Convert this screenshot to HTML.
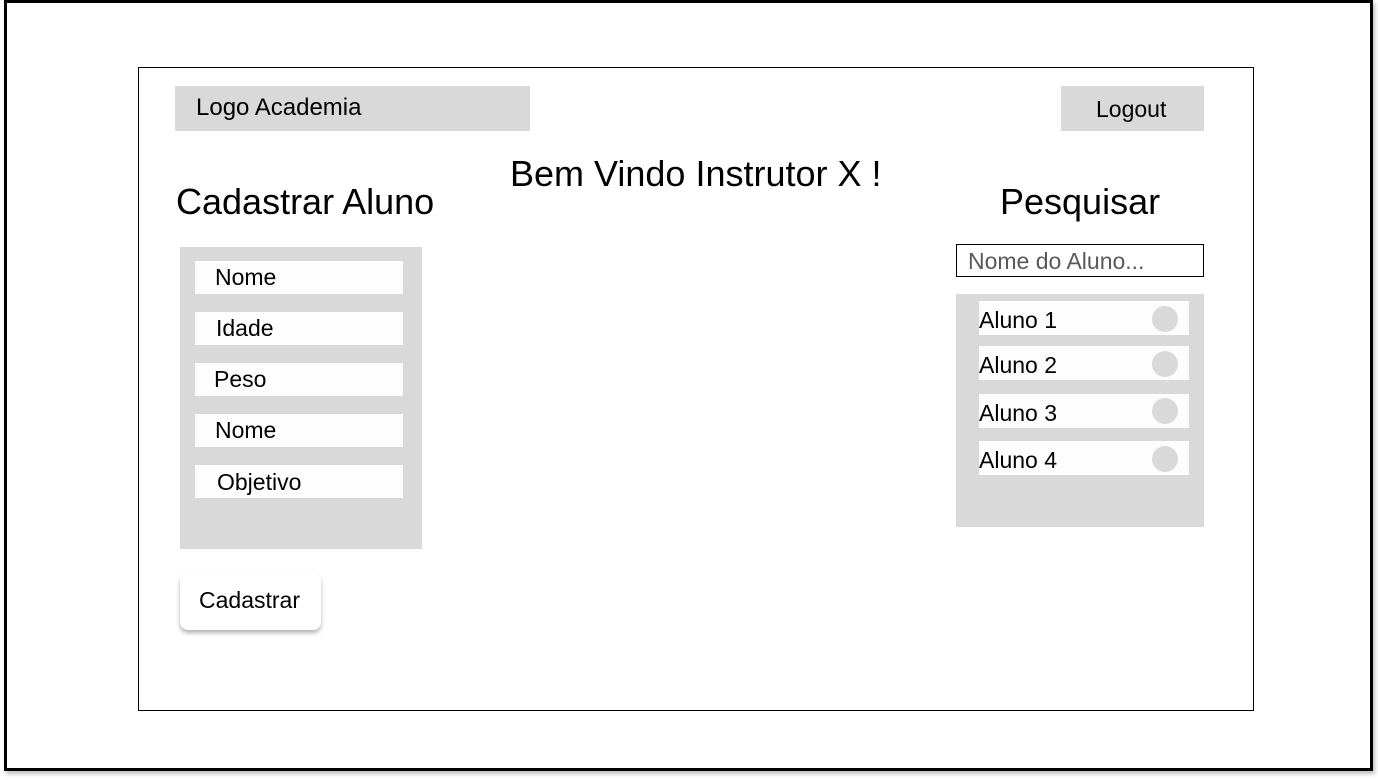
<!DOCTYPE html>
<html><head><meta charset="utf-8"><style>
*{margin:0;padding:0;box-sizing:border-box}
body{width:1378px;height:780px;background:#fff;position:relative;overflow:hidden;font-family:"Liberation Sans",Arial,sans-serif;color:#000}
.a{position:absolute;white-space:nowrap}
.g{background:#d9d9d9}
.w{background:#fdfdfd}
.t{letter-spacing:0}
</style></head><body>
<div class="a" style="left:4px;top:0;width:1369px;height:771px;border:3px solid #000;box-shadow:2px 3px 4px rgba(0,0,0,0.25)"></div>
<div class="a" style="left:138px;top:67px;width:1116px;height:644px;border:1px solid #000"></div>

<div class="a g" style="left:175px;top:86px;width:355px;height:45px"></div>
<div class="a t" style="left:196px;top:94px;font-size:24px">Logo Academia</div>
<div class="a g" style="left:1061px;top:86px;width:143px;height:45px"></div>
<div class="a t" style="left:1096px;top:96px;font-size:23px">Logout</div>

<div class="a t" style="left:510px;top:153px;font-size:36px">Bem Vindo Instrutor X !</div>
<div class="a t" style="left:176px;top:181px;font-size:36px">Cadastrar Aluno</div>
<div class="a t" style="left:1000px;top:181px;font-size:36px">Pesquisar</div>

<div class="a g" style="left:180px;top:247px;width:242px;height:302px"></div>
<div class="a w" style="left:195px;top:261px;width:208px;height:33px"></div>
<div class="a t" style="left:215px;top:264px;font-size:23px">Nome</div>
<div class="a w" style="left:195px;top:312px;width:208px;height:33px"></div>
<div class="a t" style="left:216px;top:315px;font-size:23px">Idade</div>
<div class="a w" style="left:195px;top:363px;width:208px;height:33px"></div>
<div class="a t" style="left:214px;top:366px;font-size:23px">Peso</div>
<div class="a w" style="left:195px;top:414px;width:208px;height:33px"></div>
<div class="a t" style="left:215px;top:417px;font-size:23px">Nome</div>
<div class="a w" style="left:195px;top:465px;width:208px;height:33px"></div>
<div class="a t" style="left:217px;top:469px;font-size:23px">Objetivo</div>

<div class="a" style="left:180px;top:573px;width:141px;height:57px;background:#fff;border-radius:8px;box-shadow:0 3px 4px rgba(0,0,0,0.3)"></div>
<div class="a t" style="left:199px;top:587px;font-size:23px">Cadastrar</div>

<div class="a" style="left:956px;top:244px;width:248px;height:33px;border:1.5px solid #000"></div>
<div class="a t" style="left:968px;top:248px;font-size:23px;color:#595959">Nome do Aluno...</div>

<div class="a g" style="left:956px;top:294px;width:248px;height:233px"></div>
<div class="a w" style="left:979px;top:301px;width:210px;height:34px"></div>
<div class="a t" style="left:979px;top:307px;font-size:23px">Aluno 1</div>
<div class="a g" style="left:1152px;top:306px;width:26px;height:26px;border-radius:50%"></div>
<div class="a w" style="left:979px;top:346px;width:210px;height:34px"></div>
<div class="a t" style="left:979px;top:352px;font-size:23px">Aluno 2</div>
<div class="a g" style="left:1152px;top:351px;width:26px;height:26px;border-radius:50%"></div>
<div class="a w" style="left:979px;top:394px;width:210px;height:34px"></div>
<div class="a t" style="left:979px;top:400px;font-size:23px">Aluno 3</div>
<div class="a g" style="left:1152px;top:398px;width:26px;height:26px;border-radius:50%"></div>
<div class="a w" style="left:979px;top:441px;width:210px;height:34px"></div>
<div class="a t" style="left:979px;top:447px;font-size:23px">Aluno 4</div>
<div class="a g" style="left:1152px;top:446px;width:26px;height:26px;border-radius:50%"></div>
</body></html>
